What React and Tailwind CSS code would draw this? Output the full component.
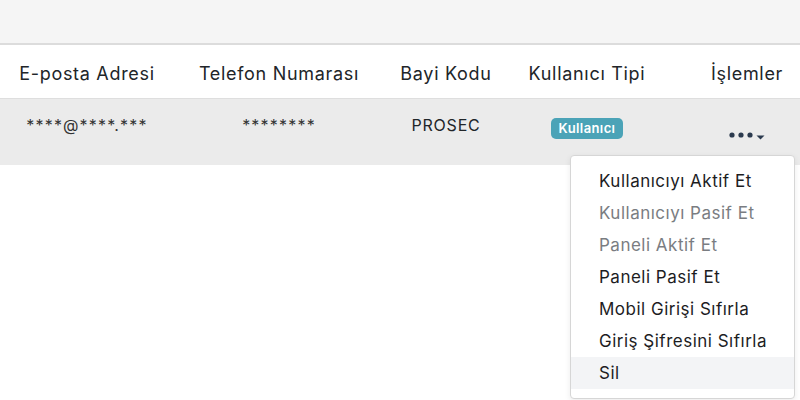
import React from "react";

const font = { fontFamily: "Inter, 'Open Sans', sans-serif" };

function Dots() {
  return (
    <svg width="40" height="12" viewBox="0 0 40 12" className="inline-block">
      <circle cx="5" cy="6" r="2.6" fill="#2b3a4e" />
      <circle cx="14" cy="6" r="2.6" fill="#2b3a4e" />
      <circle cx="23" cy="6" r="2.6" fill="#2b3a4e" />
      <path d="M29.5 6.5 L37.5 6.5 L33.5 10.5 Z" fill="#2b3a4e" />
    </svg>
  );
}

export default function App() {
  const items = [
    { t: "Kullanıcıyı Aktif Et", c: "text-[#1d1d1f]" },
    { t: "Kullanıcıyı Pasif Et", c: "text-[#7a7d82]" },
    { t: "Paneli Aktif Et", c: "text-[#7a7d82]" },
    { t: "Paneli Pasif Et", c: "text-[#1d1d1f]" },
    { t: "Mobil Girişi Sıfırla", c: "text-[#1d1d1f]" },
    { t: "Giriş Şifresini Sıfırla", c: "text-[#1d1d1f]" },
    { t: "Sil", c: "text-[#1d1d1f] bg-[#f3f4f6]" },
  ];
  return (
    <div className="relative w-[800px] h-[400px] overflow-hidden bg-white" style={font}>
      <div className="h-[45px] bg-[#f5f5f5] border-b-2 border-[#dcdcdc]" />
      <div className="grid grid-cols-[174px_210px_124px_158px_162px] w-[828px] h-[54px] pt-[3px] items-center text-center text-[18px] text-[#212529] border-b border-[#dedede] tracking-[0.7px]">
        <div>E-posta Adresi</div>
        <div>Telefon Numarası</div>
        <div>Bayi Kodu</div>
        <div>Kullanıcı Tipi</div>
        <div>İşlemler</div>
      </div>
      <div className="grid grid-cols-[174px_210px_124px_158px_162px] w-[828px] h-[66px] bg-[#ebebeb] text-center text-[16px] text-[#212529] tracking-[0.8px]">
        <div className="pt-[14px] text-[#333] tracking-[1.2px]">****@****.***</div>
        <div className="pt-[14px] text-[#333] tracking-[1.2px]">********</div>
        <div className="pt-[14px]">PROSEC</div>
        <div className="pt-[16px]">
          <span className="inline-block bg-[#4ba3b7] text-white text-[13px] font-semibold rounded-[5px] px-[8px] h-[21px] leading-[21px] tracking-[0.4px]">Kullanıcı</span>
        </div>
        <div className="pt-[22px]">
          <Dots />
        </div>
      </div>
      <div className="absolute left-[570px] top-[155px] w-[225px] bg-white border border-[#d6d6d6] rounded-[4px] py-[9px] shadow-[0_2px_6px_rgba(0,0,0,0.08)]">
        {items.map((it) => (
          <div key={it.t} className={`h-[32px] flex items-center pl-[28px] pt-[2px] text-[17px] tracking-[0.5px] ${it.c}`}>
            {it.t}
          </div>
        ))}
      </div>
    </div>
  );
}
